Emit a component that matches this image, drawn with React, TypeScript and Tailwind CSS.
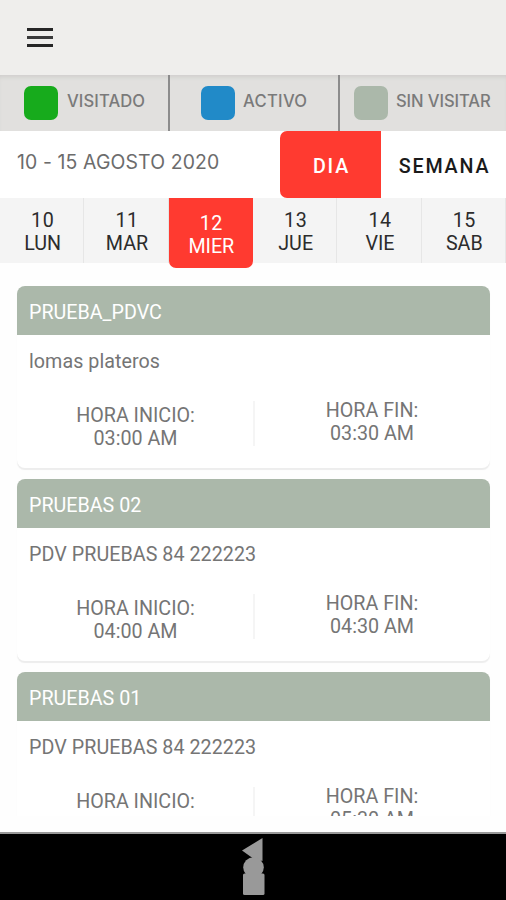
import React from 'react';

interface Visit {
  name: string;
  address: string;
  start?: string;
  end: string;
}

const legend = [
  { label: 'VISITADO', box: 'bg-[#17ab1c]', cell: 'pl-6 gap-[9px]', text: 'tracking-[0.1px]' },
  { label: 'ACTIVO', box: 'bg-[#218ac8]', cell: 'pl-[31px] gap-2 border-l-2 border-[#8c8c8c]', text: 'tracking-[0.3px]' },
  { label: 'SIN VISITAR', box: 'bg-[#abb8aa]', cell: 'pl-[14px] gap-2 border-l-2 border-[#8c8c8c]', text: 'tracking-[-0.1px]' },
];

const days = [
  { number: '10', name: 'LUN' },
  { number: '11', name: 'MAR' },
  { number: '12', name: 'MIER', active: true },
  { number: '13', name: 'JUE' },
  { number: '14', name: 'VIE' },
  { number: '15', name: 'SAB' },
];

const visits: Visit[] = [
  { name: 'PRUEBA_PDVC', address: 'lomas plateros', start: '03:00 AM', end: '03:30 AM' },
  { name: 'PRUEBAS 02', address: 'PDV PRUEBAS 84 222223', start: '04:00 AM', end: '04:30 AM' },
  { name: 'PRUEBAS 01', address: 'PDV PRUEBAS 84 222223', end: '05:30 AM' },
];

const VisitCard: React.FC<{ visit: Visit }> = ({ visit }) => (
  <div className="h-[182px] shrink-0 rounded-lg bg-white shadow-[0_2px_1px_-0.5px_#ededed]">
    <div className="h-[49px] rounded-t-lg bg-[#abb8aa] pl-3 pt-[15px] text-white">{visit.name}</div>
    <p className="pl-3 pt-[15px] tracking-[0.05px]">{visit.address}</p>
    <div className="mt-[25px] flex text-center">
      <div className="w-[236px] pl-px pt-1.5">
        <p>HORA INICIO:</p>
        {visit.start && <p>{visit.start}</p>}
      </div>
      <div className="mt-[3px] h-[45px] w-0.5 bg-[#f5f5f5]" />
      <div className="flex-1 pr-px pt-px">
        <p>HORA FIN:</p>
        <p>{visit.end}</p>
      </div>
    </div>
  </div>
);

const App: React.FC = () => {
  return (
    <div className="flex h-[900px] w-[506px] flex-col overflow-hidden bg-[#fefefe] font-['Roboto',sans-serif]">
      <header className="h-[75px] shrink-0 bg-[#efeeec] pl-[27px] pt-7">
        <button className="flex w-[26px] flex-col gap-[5px]" aria-label="Menu">
          <span className="h-[3px] w-full bg-[#262626]" />
          <span className="h-[3px] w-full bg-[#3a3a3a]" />
          <span className="h-[3px] w-full bg-[#262626]" />
        </button>
      </header>

      <div className="grid h-14 shrink-0 grid-cols-[168px_170px_168px] bg-[#e1e0de] shadow-[inset_0_4px_4px_-2px_#cfcecc]">
        {legend.map((item) => (
          <div key={item.label} className={`flex items-center ${item.cell}`}>
            <span className={`h-[34px] w-[34px] shrink-0 rounded-[7px] ${item.box}`} />
            <span className={`whitespace-nowrap pb-[3px] font-['Inter',sans-serif] text-[16.6px] font-medium text-[#7a7a7a] ${item.text}`}>
              {item.label}
            </span>
          </div>
        ))}
      </div>

      <div className="flex h-[67px] shrink-0 items-center bg-white">
        <span className="w-[280px] whitespace-nowrap pb-[3px] pl-[17px] font-['Inter',sans-serif] text-[19.4px] tracking-[0.13px] text-[#6c6c6c]">
          10 - 15 AGOSTO 2020
        </span>
        <button className="h-full w-[101px] rounded-l-[7px] bg-[#ff3a30] pl-0.5 pt-[5px] text-[19.7px] font-medium tracking-[1.8px] text-white">
          DIA
        </button>
        <button className="flex-1 whitespace-nowrap pl-0.5 pt-[5px] text-[19.7px] font-medium tracking-[1.8px] text-[#1a1a1a]">
          SEMANA
        </button>
      </div>

      <div className="grid h-[65px] shrink-0 grid-cols-6 grid-rows-[65px] text-center text-[19.7px] leading-[23px]">
        {days.map((day) =>
          day.active ? (
            <div key={day.number} className="h-[70px] rounded-b-[7px] bg-[#ff3a30] pl-px pt-[14px] text-white">
              <p className="tracking-[0.5px]">{day.number}</p>
              <p>{day.name}</p>
            </div>
          ) : (
            <div key={day.number} className="border-r border-[#e6e6e6] bg-[#f4f4f4] pl-0.5 pt-[11px] text-[#2c2c2c]">
              <p className="tracking-[0.5px]">{day.number}</p>
              <p>{day.name}</p>
            </div>
          )
        )}
      </div>

      <main className="mt-[23px] flex h-[530px] shrink-0 flex-col gap-[11px] overflow-hidden pl-[17px] pr-4 text-[19.7px] leading-[23px] text-[#757575]">
        {visits.map((visit) => (
          <VisitCard key={visit.name} visit={visit} />
        ))}
      </main>

      <footer className="mt-4 flex flex-1 justify-center border-t-2 border-[#999] bg-black">
        <svg width="24" height="62" viewBox="0 0 24 62" fill="#999">
          <path d="M21.5 4 L1 16.5 L11.5 24 L21.5 27 Z" />
          <circle cx="12.5" cy="33.5" r="10.3" />
          <rect x="2" y="39.5" width="21.5" height="21.5" rx="1.5" />
        </svg>
      </footer>
    </div>
  );
};

export default App;
